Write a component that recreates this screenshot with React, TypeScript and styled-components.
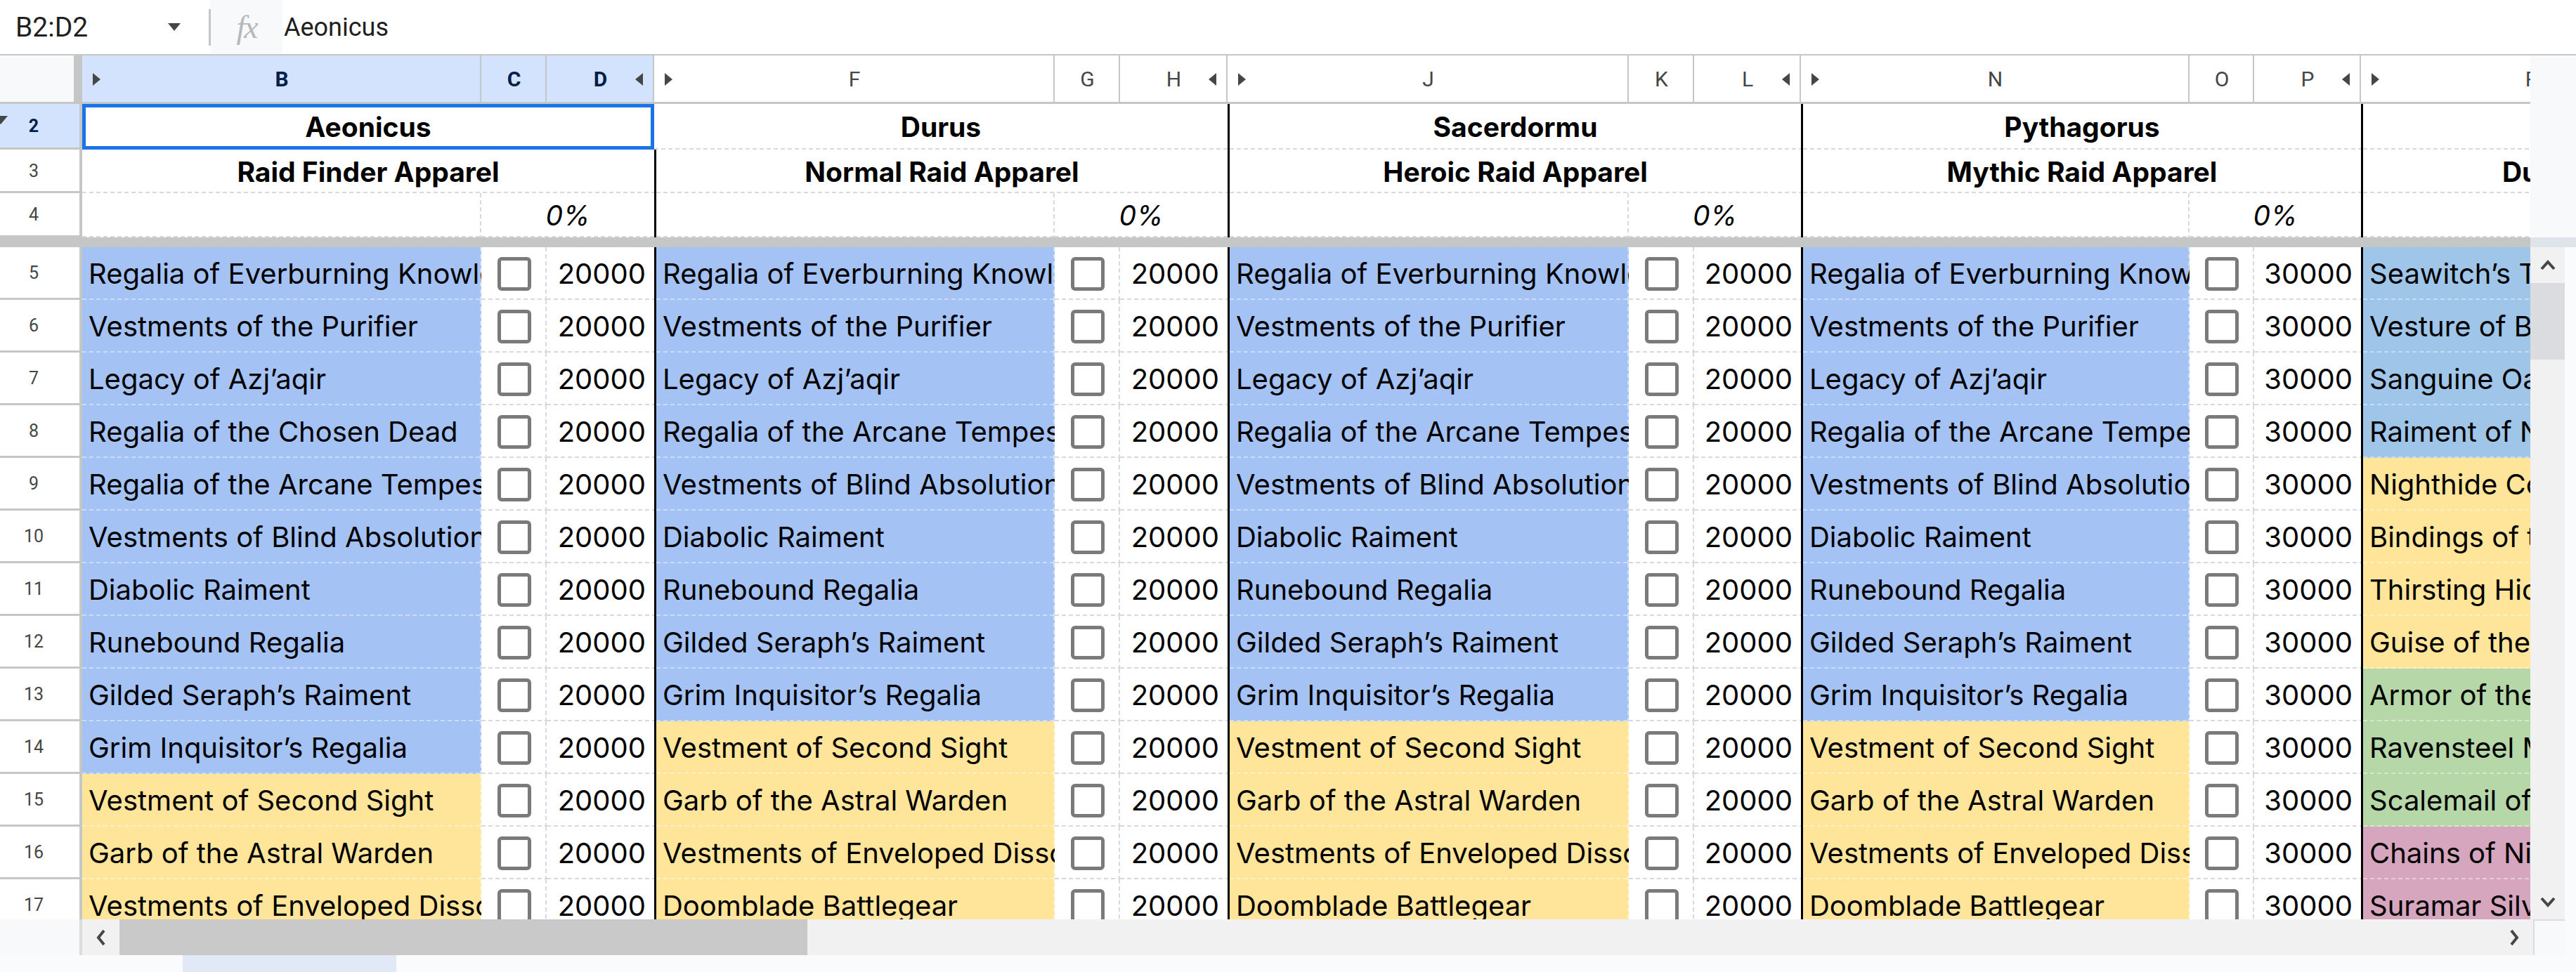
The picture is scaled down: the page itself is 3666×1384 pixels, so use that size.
import React from 'react';
import styled, { createGlobalStyle, css } from 'styled-components';

const GlobalStyle = createGlobalStyle`
  * { box-sizing: border-box; }
  html, body { margin: 0; padding: 0; background: #f9fbfd; }
  body { font-family: Roboto, "Liberation Sans", sans-serif; overflow: hidden; }
`;

const BORDER = '#c4c7c5';
const SELECT_BG = '#d3e3fd';
const SELECT_TEXT = '#041e49';
const CELL_FONT = 'Inter, "Liberation Sans", sans-serif';

const COL_WIDTHS = [568, 93, 153, 570, 93, 153, 571, 93, 152, 553, 92, 152, 486, 93, 152];
const TEMPLATE = `117px ${COL_WIDTHS.map((w) => `${w}px`).join(' ')}`;
const GRID_WIDTH = 117 + COL_WIDTHS.reduce((a, b) => a + b, 0);

const FILL = {
  white: '#ffffff',
  blue: '#a4c2f4',
  yellow: '#ffe599',
  sky: '#9fc5e8',
  green: '#b6d7a8',
  pink: '#d5a6bd',
};

type Fill = keyof typeof FILL;
type Item = [string, Fill];

interface Group {
  letters: [string, string, string];
  boss: string;
  title: string;
  price: number;
  items: Item[];
  selected?: boolean;
}

const RAID_ITEMS: Item[] = [
  ['Regalia of Everburning Knowledge', 'blue'],
  ['Vestments of the Purifier', 'blue'],
  ['Legacy of Azj’aqir', 'blue'],
  ['Regalia of the Arcane Tempest', 'blue'],
  ['Vestments of Blind Absolution', 'blue'],
  ['Diabolic Raiment', 'blue'],
  ['Runebound Regalia', 'blue'],
  ['Gilded Seraph’s Raiment', 'blue'],
  ['Grim Inquisitor’s Regalia', 'blue'],
  ['Vestment of Second Sight', 'yellow'],
  ['Garb of the Astral Warden', 'yellow'],
  ['Vestments of Enveloped Dissonance', 'yellow'],
  ['Doomblade Battlegear', 'yellow'],
];

const FINDER_ITEMS: Item[] = [
  ['Regalia of Everburning Knowledge', 'blue'],
  ['Vestments of the Purifier', 'blue'],
  ['Legacy of Azj’aqir', 'blue'],
  ['Regalia of the Chosen Dead', 'blue'],
  ['Regalia of the Arcane Tempest', 'blue'],
  ['Vestments of Blind Absolution', 'blue'],
  ['Diabolic Raiment', 'blue'],
  ['Runebound Regalia', 'blue'],
  ['Gilded Seraph’s Raiment', 'blue'],
  ['Grim Inquisitor’s Regalia', 'blue'],
  ['Vestment of Second Sight', 'yellow'],
  ['Garb of the Astral Warden', 'yellow'],
  ['Vestments of Enveloped Dissonance', 'yellow'],
];

const DUNGEON_ITEMS: Item[] = [
  ['Seawitch’s Trappings', 'sky'],
  ['Vesture of Bloodlust', 'sky'],
  ['Sanguine Oathkeeper', 'sky'],
  ['Raiment of Nightmares', 'sky'],
  ['Nighthide Coverings', 'yellow'],
  ['Bindings of the Wilds', 'yellow'],
  ['Thirsting Hide Armor', 'yellow'],
  ['Guise of the Deceiver', 'yellow'],
  ['Armor of the Darkmoon', 'green'],
  ['Ravensteel Mail', 'green'],
  ['Scalemail of the Depths', 'green'],
  ['Chains of Nightmares', 'pink'],
  ['Suramar Silversteel', 'pink'],
];

const GROUPS: Group[] = [
  { letters: ['B', 'C', 'D'], boss: 'Aeonicus', title: 'Raid Finder Apparel', price: 20000, items: FINDER_ITEMS, selected: true },
  { letters: ['F', 'G', 'H'], boss: 'Durus', title: 'Normal Raid Apparel', price: 20000, items: RAID_ITEMS },
  { letters: ['J', 'K', 'L'], boss: 'Sacerdormu', title: 'Heroic Raid Apparel', price: 20000, items: RAID_ITEMS },
  { letters: ['N', 'O', 'P'], boss: 'Pythagorus', title: 'Mythic Raid Apparel', price: 30000, items: RAID_ITEMS },
  { letters: ['R', 'S', 'T'], boss: 'Illidari', title: 'Dungeon Apparel', price: 30000, items: DUNGEON_ITEMS },
];

const gridLines = (fill: string, right: boolean) => {
  const dash = fill === FILL.white ? '#d9d9d9' : 'rgba(255, 255, 255, 0.42)';
  return css`
    background:
      linear-gradient(to right, ${dash} 6px, transparent 6px) left bottom / 10px 2px repeat-x,
      ${right ? `linear-gradient(to bottom, ${dash} 6px, transparent 6px) right top / 2px 10px repeat-y,` : ''}
      ${fill};
  `;
};

const Page = styled.div`
  width: 3666px;
  height: 1384px;
  display: flex;
  flex-direction: column;
  background: #f9fbfd;
  overflow: hidden;
`;

const FormulaBar = styled.div`
  height: 79px;
  flex: none;
  display: flex;
  align-items: center;
  background: #fff;
  border-bottom: 2px solid ${BORDER};
`;

const NameBox = styled.div`
  width: 297px;
  display: flex;
  align-items: center;
  justify-content: space-between;
  padding: 0 40px 0 22px;
  font: 400 39px Roboto, "Liberation Sans", sans-serif;
  color: #1f1f1f;
`;

const DropArrow = styled.span`
  width: 0;
  height: 0;
  border-left: 9px solid transparent;
  border-right: 9px solid transparent;
  border-top: 11px solid #444746;
`;

const BarDivider = styled.div`
  width: 3px;
  height: 52px;
  background: ${BORDER};
`;

const FxBox = styled.div`
  width: 102px;
  height: 77px;
  display: flex;
  align-items: center;
  justify-content: center;
  background: #f8f9fa;
  font: italic 400 46px "Liberation Serif", serif;
  color: #b5b8bb;
  letter-spacing: -2px;
`;

const FormulaText = styled.div`
  padding-left: 2px;
  font: 400 36px Roboto, "Liberation Sans", sans-serif;
  color: #1f1f1f;
`;

const PaneRow = styled.div`
  display: flex;
  flex: none;
`;

const Viewport = styled.div<{ $height: number }>`
  width: 3601px;
  height: ${(p) => p.$height}px;
  overflow: hidden;
  flex: none;
`;

const SheetGrid = styled.div<{ $rows: string }>`
  display: grid;
  grid-template-columns: ${TEMPLATE};
  grid-template-rows: ${(p) => p.$rows};
  width: ${GRID_WIDTH}px;
`;

const Gutter = styled.div<{ $tone?: string }>`
  flex: 1;
  background: ${(p) => p.$tone || '#f8f9fa'};
`;

const Corner = styled.div`
  background: #f8f9fa;
  box-shadow: inset -12px 0 ${BORDER}, inset 0 -3px ${BORDER};
`;

const ColHeader = styled.div<{ $selected?: boolean }>`
  display: grid;
  grid-template-columns: 34px 1fr 34px;
  align-items: center;
  text-align: center;
  background: ${(p) => (p.$selected ? SELECT_BG : '#fff')};
  box-shadow: inset -2px 0 ${BORDER}, inset 0 -3px ${BORDER};
  font: ${(p) => (p.$selected ? 700 : 400)} 30px Roboto, "Liberation Sans", sans-serif;
  color: ${(p) => (p.$selected ? SELECT_TEXT : '#444746')};
  padding-bottom: 2px;
`;

const MarkSlot = styled.span<{ $side: 'start' | 'end' }>`
  display: flex;
  justify-content: ${(p) => (p.$side === 'start' ? 'flex-start' : 'flex-end')};
`;

const HiddenMark = styled.span<{ $dir: 'left' | 'right' }>`
  width: 0;
  height: 0;
  border-top: 9px solid transparent;
  border-bottom: 9px solid transparent;
  ${(p) => (p.$dir === 'right'
    ? css`border-left: 11px solid #444746; margin-left: 15px;`
    : css`border-right: 11px solid #444746; margin-right: 16px;`)}
`;

const RowHead = styled.div<{ $selected?: boolean }>`
  position: relative;
  overflow: hidden;
  display: flex;
  align-items: center;
  justify-content: center;
  padding: 0 21px 2px 0;
  background: ${(p) => (p.$selected ? SELECT_BG : '#fff')};
  box-shadow: inset -4px 0 ${BORDER}, inset 0 -3px ${BORDER};
  font: ${(p) => (p.$selected ? 700 : 400)} 25px Roboto, "Liberation Sans", sans-serif;
  color: ${(p) => (p.$selected ? SELECT_TEXT : '#444746')};
`;

const GroupToggle = styled.span`
  position: absolute;
  left: -9px;
  top: 17px;
  width: 0;
  height: 0;
  border-left: 10px solid transparent;
  border-right: 10px solid transparent;
  border-top: 12px solid #444746;
`;

const TitleCell = styled.div<{ $span: number; $edge?: boolean; $selected?: boolean; $italic?: boolean; $lines?: boolean }>`
  grid-column: span ${(p) => p.$span};
  display: flex;
  align-items: center;
  justify-content: center;
  overflow: hidden;
  white-space: nowrap;
  font: ${(p) => (p.$italic ? 'italic 400' : '700')} 39px ${CELL_FONT};
  color: #000;
  ${(p) => gridLines(FILL.white, !!p.$lines)}
  border-left: ${(p) => (p.$edge ? '3px solid #000' : 'none')};
  ${(p) => p.$selected && css`
    border: 5px solid #1a73e8;
    background: #fff;
  `}
`;

const FreezeLine = styled.div`
  width: 3601px;
  height: 14px;
  flex: none;
  background: ${BORDER};
`;

const NameCell = styled.div<{ $fill: string; $edge: boolean }>`
  display: flex;
  align-items: center;
  padding-left: 9px;
  overflow: hidden;
  white-space: nowrap;
  font: 400 40px ${CELL_FONT};
  color: #000;
  ${(p) => gridLines(p.$fill, true)}
  border-left: ${(p) => (p.$edge ? '3px solid #000' : 'none')};
`;

const CheckCell = styled.div`
  display: flex;
  align-items: center;
  justify-content: center;
  ${gridLines(FILL.white, true)}
`;

const Checkbox = styled.span`
  width: 48px;
  height: 48px;
  border: 5px solid #7a7a7a;
  border-radius: 6px;
  background: #fff;
`;

const ValueCell = styled.div`
  display: flex;
  align-items: center;
  justify-content: flex-end;
  padding-right: 12px;
  font: 400 40px ${CELL_FONT};
  color: #000;
  ${gridLines(FILL.white, false)}
`;

const VScroll = styled.div`
  width: 49px;
  height: 957px;
  flex: none;
  display: flex;
  flex-direction: column;
  background: #f1f1f1;
`;

const ScrollButton = styled.div<{ $w?: number }>`
  height: 51px;
  width: ${(p) => (p.$w ? `${p.$w}px` : 'auto')};
  flex: none;
  display: flex;
  align-items: center;
  justify-content: center;
  color: #444746;
`;

const VThumb = styled.div`
  height: 109px;
  flex: none;
  background: #dadce0;
`;

const Spacer = styled.div`
  flex: 1;
`;

const HScrollRow = styled.div`
  height: 51px;
  flex: none;
  display: flex;
`;

const HLeft = styled.div`
  width: 117px;
  background: #f8f9fa;
  box-shadow: inset -4px 0 #dadce0;
`;

const HTrack = styled.div`
  width: 3488px;
  display: flex;
  background: #f1f1f1;
`;

const HThumb = styled.div`
  width: 979px;
  background: #c9c9c9;
`;

const HCorner = styled.div`
  width: 45px;
  background: #f8f9fa;
  border-left: 2px solid #dadce0;
  border-top: 2px solid #dadce0;
`;

const SheetTabs = styled.div`
  height: 24px;
  flex: none;
  display: flex;
  padding-left: 260px;
  background: #f9fbfd;
`;

const ActiveTab = styled.div`
  width: 304px;
  background: #e1e9f7;
`;

function Chevron({ dir }: { dir: 'up' | 'down' | 'left' | 'right' }) {
  const points = {
    up: '3,15 12,5 21,15',
    down: '3,5 12,15 21,5',
    left: '13,2 5,12 13,22',
    right: '5,2 13,12 5,22',
  }[dir];
  const vertical = dir === 'up' || dir === 'down';
  return (
    <svg width={vertical ? 24 : 18} height={vertical ? 20 : 24} viewBox={vertical ? '0 0 24 20' : '0 0 18 24'}>
      <polyline points={points} fill="none" stroke="currentColor" strokeWidth="4" strokeLinejoin="miter" />
    </svg>
  );
}

function App() {
  return (
    <>
      <GlobalStyle />
      <Page>
        <FormulaBar>
          <NameBox>
            <span>B2:D2</span>
            <DropArrow />
          </NameBox>
          <BarDivider />
          <FxBox>fx</FxBox>
          <FormulaText>Aeonicus</FormulaText>
        </FormulaBar>

        <PaneRow>
          <Viewport $height={259}>
            <SheetGrid $rows="69px 65px 62px 63px">
              <Corner />
              {GROUPS.flatMap((g) => g.letters.map((letter, i) => (
                <ColHeader key={letter} $selected={g.selected}>
                  <MarkSlot $side="start">{i === 0 && <HiddenMark $dir="right" />}</MarkSlot>
                  <span>{letter}</span>
                  <MarkSlot $side="end">{i === 2 && <HiddenMark $dir="left" />}</MarkSlot>
                </ColHeader>
              )))}

              <RowHead $selected>
                <GroupToggle />
                2
              </RowHead>
              {GROUPS.map((g, gi) => (
                <TitleCell key={g.boss} $span={3} $selected={g.selected} $edge={gi > 1}>
                  {g.boss}
                </TitleCell>
              ))}

              <RowHead>3</RowHead>
              {GROUPS.map((g, gi) => (
                <TitleCell key={g.title} $span={3} $edge={gi > 0}>
                  {g.title}
                </TitleCell>
              ))}

              <RowHead>4</RowHead>
              {GROUPS.map((g, gi) => (
                <React.Fragment key={g.letters[0]}>
                  <TitleCell $span={1} $edge={gi > 0} $lines />
                  <TitleCell $span={2} $italic>0%</TitleCell>
                </React.Fragment>
              ))}
            </SheetGrid>
          </Viewport>
          <Gutter />
        </PaneRow>

        <PaneRow>
          <FreezeLine />
          <Gutter $tone="#dfe3ea" />
        </PaneRow>

        <PaneRow>
          <Viewport $height={957}>
            <SheetGrid $rows="repeat(13, 75px)">
              {FINDER_ITEMS.map((_, row) => (
                <React.Fragment key={row}>
                  <RowHead>{row + 5}</RowHead>
                  {GROUPS.map((g, gi) => {
                    const [name, fill] = g.items[row];
                    return (
                      <React.Fragment key={g.letters[0]}>
                        <NameCell $fill={FILL[fill]} $edge={gi > 0}>{name}</NameCell>
                        <CheckCell><Checkbox /></CheckCell>
                        <ValueCell>{g.price}</ValueCell>
                      </React.Fragment>
                    );
                  })}
                </React.Fragment>
              ))}
            </SheetGrid>
          </Viewport>
          <VScroll>
            <ScrollButton><Chevron dir="up" /></ScrollButton>
            <VThumb />
            <Spacer />
            <ScrollButton><Chevron dir="down" /></ScrollButton>
          </VScroll>
          <Gutter $tone="#f9fbfd" />
        </PaneRow>

        <HScrollRow>
          <HLeft />
          <HTrack>
            <ScrollButton $w={53}><Chevron dir="left" /></ScrollButton>
            <HThumb />
            <Spacer />
            <ScrollButton $w={54}><Chevron dir="right" /></ScrollButton>
          </HTrack>
          <HCorner />
          <Gutter $tone="#f9fbfd" />
        </HScrollRow>

        <SheetTabs>
          <ActiveTab />
        </SheetTabs>
      </Page>
    </>
  );
}

export default App;
